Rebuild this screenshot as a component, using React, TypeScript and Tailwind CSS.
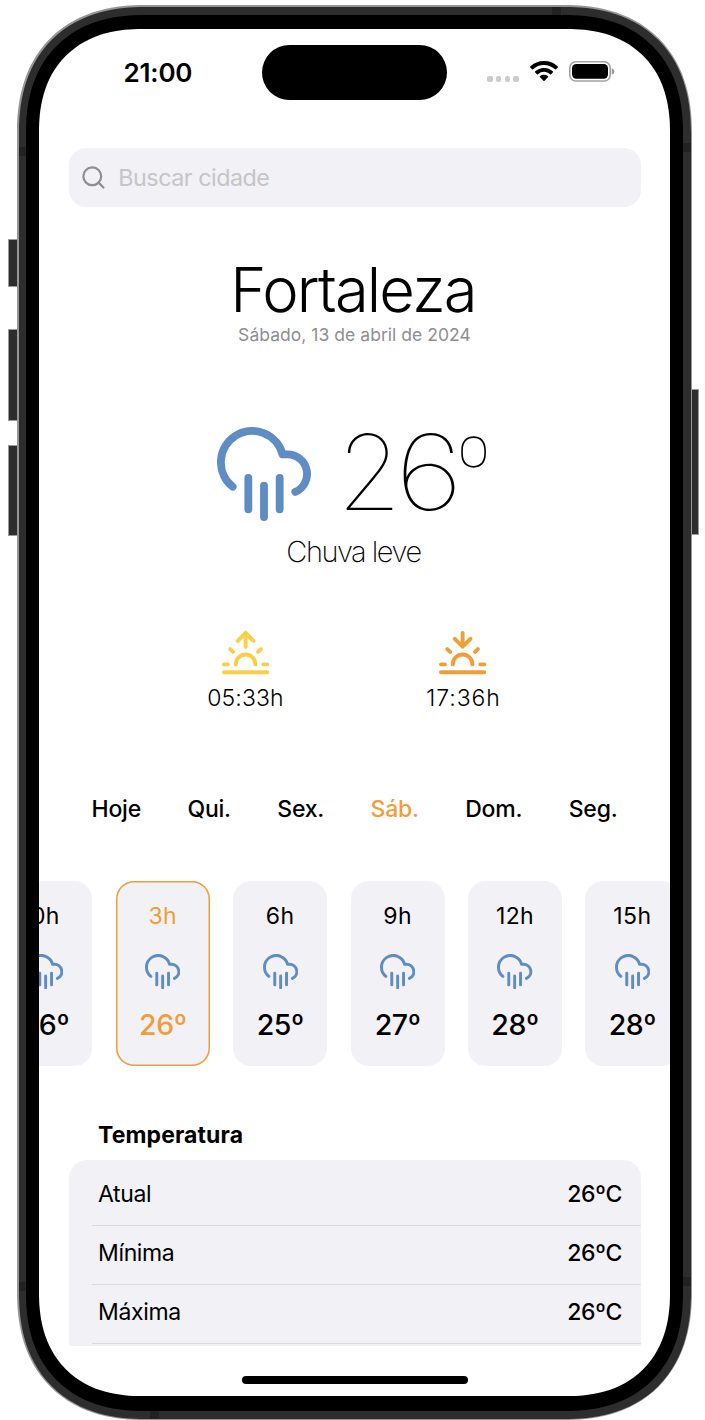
import React from "react";

type IconProps = { className?: string };

const stroke = {
  viewBox: "0 0 24 24",
  fill: "none",
  stroke: "currentColor",
  strokeWidth: 2,
  strokeLinecap: "round" as const,
  strokeLinejoin: "round" as const,
};

const RainIcon = ({ className }: IconProps) => (
  <svg {...stroke} className={className}>
    <path d="M16 13v8M8 13v8M12 15v8M20 16.58A5 5 0 0 0 18 7h-1.26A8 8 0 1 0 4 15.25" />
  </svg>
);

const SunriseIcon = ({ className }: IconProps) => (
  <svg {...stroke} className={className}>
    <path d="M17 18a5 5 0 0 0-10 0M12 2v7M4.22 10.22l1.42 1.42M1 18h2M21 18h2M18.36 11.64l1.42-1.42M23 22H1M8 6l4-4 4 4" />
  </svg>
);

const SunsetIcon = ({ className }: IconProps) => (
  <svg {...stroke} className={className}>
    <path d="M17 18a5 5 0 0 0-10 0M12 9V2M4.22 10.22l1.42 1.42M1 18h2M21 18h2M18.36 11.64l1.42-1.42M23 22H1M16 5l-4 4-4-4" />
  </svg>
);

const SearchIcon = ({ className }: IconProps) => (
  <svg {...stroke} className={className}>
    <circle cx="11" cy="11" r="8" />
    <path d="M21 21l-4.35-4.35" />
  </svg>
);

const WifiIcon = ({ className }: IconProps) => (
  <svg viewBox="0 0 28 20" fill="currentColor" className={className}>
    <path d="M14 0C8.7 0 3.9 2 .3 5.4a.8.8 0 0 0 0 1.2l1.6 1.6a.8.8 0 0 0 1.1 0A15.9 15.9 0 0 1 14 3.9c4.2 0 8.1 1.6 11 4.3a.8.8 0 0 0 1.1 0l1.6-1.6a.8.8 0 0 0 0-1.2A19.9 19.9 0 0 0 14 0z" />
    <path d="M14 6.9c-3.4 0-6.5 1.3-8.8 3.4a.8.8 0 0 0 0 1.2l1.7 1.7a.8.8 0 0 0 1.1 0A8.9 8.9 0 0 1 14 10.8c2.3 0 4.4.9 6 2.4a.8.8 0 0 0 1.1 0l1.7-1.7a.8.8 0 0 0 0-1.2A12.9 12.9 0 0 0 14 6.9z" />
    <path d="M14 13.7c-1.5 0-2.9.5-3.9 1.4a.8.8 0 0 0 0 1.2l3.3 3.4a.8.8 0 0 0 1.2 0l3.3-3.4a.8.8 0 0 0 0-1.2c-1-.9-2.4-1.4-3.9-1.4z" />
  </svg>
);

const BatteryIcon = ({ className }: IconProps) => (
  <svg viewBox="0 0 46 21" className={className}>
    <rect x="0.8" y="0.8" width="40.4" height="19.2" rx="6" fill="none" stroke="#a3a3a3" strokeWidth="1.6" />
    <rect x="3" y="3.1" width="36" height="14.6" rx="4.2" fill="#000" />
    <path d="M42.7 7.2c1.7.5 2.6 1.6 2.6 3.2s-.9 2.7-2.6 3.2z" fill="#9b9b9b" />
  </svg>
);

const days = ["Hoje", "Qui.", "Sex.", "Sáb.", "Dom.", "Seg."];

const hours = [
  { hour: "0h", temp: "26º" },
  { hour: "3h", temp: "26º" },
  { hour: "6h", temp: "25º" },
  { hour: "9h", temp: "27º" },
  { hour: "12h", temp: "28º" },
  { hour: "15h", temp: "28º" },
];

const rows = [
  { label: "Atual", value: "26ºC" },
  { label: "Mínima", value: "26ºC" },
  { label: "Máxima", value: "26ºC" },
];

function StatusBar() {
  return (
    <div className="grid h-[119px] shrink-0 grid-cols-[223px_185px_223px] items-start pt-4">
      <div className="flex h-[54.5px] items-center pt-px pl-[84.5px] text-[26px] leading-[30px] font-semibold tracking-[-0.2px]">
        21:00
      </div>
      <div className="h-[54.5px] rounded-full bg-black" />
      <div className="flex h-[54.5px] items-center pl-[40px]">
        <div className="mt-[13px] flex gap-[3.3px]">
          {[0, 1, 2, 3].map((dot) => (
            <span key={dot} className="size-[5.5px] rounded-[2px] bg-[#cccccc]" />
          ))}
        </div>
        <WifiIcon className="mt-[-2px] ml-[11px] h-5 w-7" />
        <BatteryIcon className="mt-[-1px] ml-[11.5px] h-[21px] w-[46px]" />
      </div>
    </div>
  );
}

function HourCard({ hour, temp, active }: { hour: string; temp: string; active: boolean }) {
  return (
    <div
      className={`flex h-[185.3px] w-[94px] shrink-0 flex-col items-center rounded-[18px] bg-[#f2f1f6] pt-[21.2px] ${
        active ? "text-[#f19d38] ring-[1.5px] ring-[#f19d38] ring-inset" : "text-black"
      }`}
    >
      <span className="text-[23px] leading-7 tracking-[0.4px]">{hour}</span>
      <RainIcon className="mt-[23.6px] size-[35.3px] text-[#5f8dc3]" />
      <span className="mt-[18.8px] text-[28.5px] leading-[34px] font-medium tracking-[-0.4px]">{temp}</span>
    </div>
  );
}

export default function App() {
  return (
    <div className="relative h-[1420px] w-[705px] overflow-hidden bg-white font-['Inter',sans-serif] text-black">
      {/* Side buttons */}
      <div className="absolute top-[239px] left-2 h-[48px] w-[11px] border border-[#9a9a9a] bg-[#2d2d2d]" />
      <div className="absolute top-[329px] left-2 h-[92px] w-[11px] border border-[#9a9a9a] bg-[#2d2d2d]" />
      <div className="absolute top-[445px] left-2 h-[91px] w-[11px] border border-[#9a9a9a] bg-[#2d2d2d]" />
      <div className="absolute top-[389px] left-[689px] h-[146px] w-[10px] border border-[#9a9a9a] bg-[#2d2d2d]" />

      {/* Phone body */}
      <div className="relative mt-[5px] ml-[17px] h-[1415px] w-[675px] rounded-[128px] bg-[#959595] p-[1.5px] [corner-shape:superellipse(1.2)]">
        <div className="relative h-full w-full overflow-hidden rounded-[126px] bg-[#2d2d2d] [corner-shape:superellipse(1.2)]">
          <div className="absolute top-[140px] left-0 h-[9px] w-2 bg-[#222222]" />
          <div className="absolute top-[136px] right-0 h-[9px] w-2 bg-[#222222]" />
          <div className="absolute top-[1275px] left-0 h-[9px] w-2 bg-[#222222]" />
          <div className="absolute top-[1270px] right-0 h-[9px] w-2 bg-[#222222]" />
          <div className="absolute top-0 left-[533px] h-[9px] w-[9px] bg-[#222222]" />
          <div className="absolute bottom-0 left-[131px] h-[9px] w-[9px] bg-[#222222]" />
          <div className="relative mt-[8.5px] ml-[7.5px] h-[1396px] w-[657px] rounded-[118px] bg-black px-[13px] pt-[14px] pb-[15px] [corner-shape:superellipse(1.2)]">
            <div className="flex h-full w-full flex-col overflow-hidden rounded-[103px] bg-white [corner-shape:superellipse(1.2)]">
              <StatusBar />

              <div className="mx-[29.5px] flex h-[58.5px] shrink-0 items-center rounded-[17px] bg-[#f2f1f6] pl-[11.5px]">
                <SearchIcon className="size-[26.8px] text-[#8e8e93]" />
                <span className="mt-px ml-[11.5px] text-[23.3px] leading-7 tracking-[-0.48px] text-[#c5c5c7]">
                  Buscar cidade
                </span>
              </div>

              <div className="mt-[51.5px] flex shrink-0 flex-col items-center">
                <h1 className="pr-[3px] text-[61.5px] leading-[64px] font-light tracking-[-1.85px]">Fortaleza</h1>
                <p className="mt-[2px] text-[17.5px] leading-[22px] tracking-[0.04px] text-[#8e8e93]">
                  Sábado, 13 de abril de 2024
                </p>
              </div>

              <div className="mt-[81.2px] ml-[177.6px] flex shrink-0 items-start">
                <RainIcon className="size-[94px] text-[#5f8dc3]" />
                <p className="mt-[-2px] ml-[26.4px] h-[96px] text-[104px] leading-[94px] font-thin whitespace-nowrap">
                  2<span className="-ml-[7px] inline-block origin-left scale-x-[1.16]">6</span>
                  <span className="ml-[4.5px] align-[15.5px] text-[81px] leading-[0]">º</span>
                </p>
              </div>
              <p className="mt-[12.8px] shrink-0 pr-[2px] text-center text-[29px] leading-9 font-extralight tracking-[-1.48px]">
                Chuva leve
              </p>

              <div className="mt-[59.2px] flex shrink-0 justify-center gap-[117px] pr-px text-[23px] leading-7 font-light">
                <div className="flex w-[100px] flex-col items-center">
                  <SunriseIcon className="size-[47.2px] text-[#f8cf46]" />
                  <span className="mt-[7.3px] tracking-[0.15px]">05:33h</span>
                </div>
                <div className="flex w-[100px] flex-col items-center">
                  <SunsetIcon className="size-[47.2px] text-[#f19d38]" />
                  <span className="mt-[7.3px] pl-[2px] tracking-[0.95px]">17:36h</span>
                </div>
              </div>

              <div className="mt-[83px] flex shrink-0 justify-between pr-[52.5px] pl-[52.5px] text-[23px] leading-7 font-medium tracking-[-0.2px]">
                {days.map((day) => (
                  <span key={day} className={day === "Sáb." ? "text-[#f19d38]" : ""}>
                    {day}
                  </span>
                ))}
              </div>

              <div className="mt-[58.2px] ml-[-40.6px] flex shrink-0 gap-[23.4px]">
                {hours.map((item) => (
                  <HourCard key={item.hour} {...item} active={item.hour === "3h"} />
                ))}
              </div>

              <h2 className="mt-[54.5px] ml-[59px] shrink-0 text-[23px] leading-7 font-bold tracking-[0.1px]">
                Temperatura
              </h2>
              <div className="mx-[29.5px] mt-[11.5px] h-[185.5px] shrink-0 overflow-hidden rounded-t-[18px] bg-[#f2f1f6] pt-[6.2px]">
                {rows.map((row) => (
                  <div
                    key={row.label}
                    className="ml-[23px] flex h-[59.2px] justify-between border-b border-[#dbdae0] pt-[13.4px] pr-[18.6px] pl-[6.5px] text-[23px] leading-7 tracking-[-0.36px]"
                  >
                    <span>{row.label}</span>
                    <span className="font-medium">{row.value}</span>
                  </div>
                ))}
              </div>

              <div className="mx-auto mt-[30.5px] h-[7.5px] w-[226px] shrink-0 rounded-full bg-black" />
            </div>
          </div>
        </div>
      </div>
    </div>
  );
}
